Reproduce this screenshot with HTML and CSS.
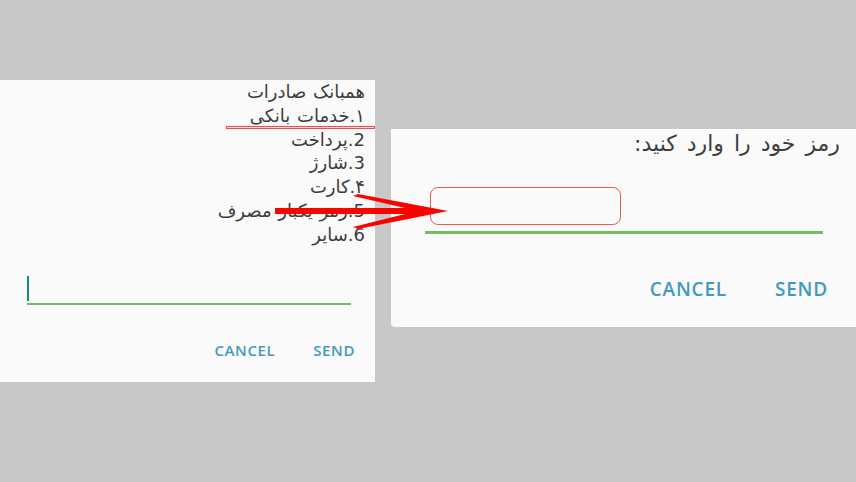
FILE: index.html
```html
<!DOCTYPE html>
<html lang="fa">
<head>
    <meta charset="UTF-8">
    <meta name="viewport" content="width=device-width, initial-scale=1.0">
    <title>USSD Dialogs</title>
    <link rel="stylesheet" href="styles.css">
</head>
<body>

    <div class="screen">
        <div class="dialog dialog-menu">
            <div class="menu">
                <div>همبانک صادرات</div>
                <div>۱.خدمات بانکی</div>
                <div>2.پرداخت</div>
                <div>3.شارژ</div>
                <div>۴.کارت</div>
                <div>5.رمز یکبار مصرف</div>
                <div>6.سایر</div>
            </div>
            <span class="mark-line"></span>

            <div class="field">
                <span class="caret"></span>
            </div>

            <div class="actions">
                <button class="action">Cancel</button>
                <button class="action">Send</button>
            </div>
        </div>

        <div class="dialog dialog-pin">
            <div class="title">رمز خود را وارد کنید:</div>

            <div class="field field-pin">
                <div class="mark-box"></div>
            </div>

            <div class="actions actions-pin">
                <button class="action">Cancel</button>
                <button class="action">Send</button>
            </div>
        </div>
    </div>

    <!-- annotation arrow from the menu to the pin dialog -->
    <svg class="arrow" width="856" height="482" viewBox="0 0 856 482">
        <polygon fill="#ff0000" points="275,208 405,208 353,196 358,194 448,211 358,229 353,227 405,214 275,214"/>
    </svg>

</body>
</html>
```

FILE: styles.css
```css
body {
    margin: 0;
    width: 856px;
    height: 482px;
    overflow: hidden;
    background-color: #c8c8c8;
    font-family: "DejaVu Sans", sans-serif;
    position: relative;
}

.screen {
    display: flex;
    align-items: flex-start;
    gap: 16px;
}

.dialog {
    background-color: #fafafa;
    position: relative;
    box-sizing: border-box;
}

.dialog-menu {
    width: 375px;
    height: 302px;
    margin-top: 80px;
}

.dialog-pin {
    flex: 1;
    height: 198px;
    margin-top: 129px;
    border-bottom-left-radius: 4px;
}

.menu {
    direction: rtl;
    padding-right: 10px;
    font-size: 18px;
    line-height: 23.8px;
    word-spacing: 1px;
    color: #3d3d3d;
}

.mark-line {
    position: absolute;
    left: 226px;
    top: 46px;
    width: 147px;
    height: 1px;
    border: 1px solid #f24b4b;
    background-color: #fcd6d6;
}

.field {
    margin: 30px 24px 0 27px;
    height: 26px;
    border-bottom: 2px solid #72bf5f;
    display: flex;
    align-items: flex-start;
}

.caret {
    width: 2px;
    height: 25px;
    margin-top: -1px;
    background-color: #138a7e;
}

.actions {
    display: flex;
    justify-content: flex-end;
    gap: 38px;
    padding-right: 20px;
    margin-top: 36px;
}

.action {
    background: none;
    border: none;
    padding: 0;
    font-family: "Open Sans", sans-serif;
    font-weight: 600;
    font-size: 15px;
    line-height: 18px;
    letter-spacing: 0.6px;
    text-transform: uppercase;
    color: #4299c0;
    cursor: pointer;
}

.title {
    direction: rtl;
    padding-right: 16px;
    font-size: 22px;
    line-height: 30px;
    word-spacing: 3px;
    color: #3d3d3d;
}

.field-pin {
    margin: 28px 33px 0 34px;
    height: 44px;
    border-bottom: 3px solid #72bf5f;
}

.mark-box {
    margin-left: 5px;
    width: 189px;
    height: 36px;
    border: 1px solid #f05656;
    border-radius: 8px;
}

.actions-pin {
    gap: 48px;
    padding-right: 28px;
    margin-top: 43px;
}

.actions-pin .action {
    font-size: 19px;
    line-height: 24px;
    letter-spacing: 0.8px;
}

.arrow {
    position: absolute;
    left: 0;
    top: 0;
    pointer-events: none;
}
```
